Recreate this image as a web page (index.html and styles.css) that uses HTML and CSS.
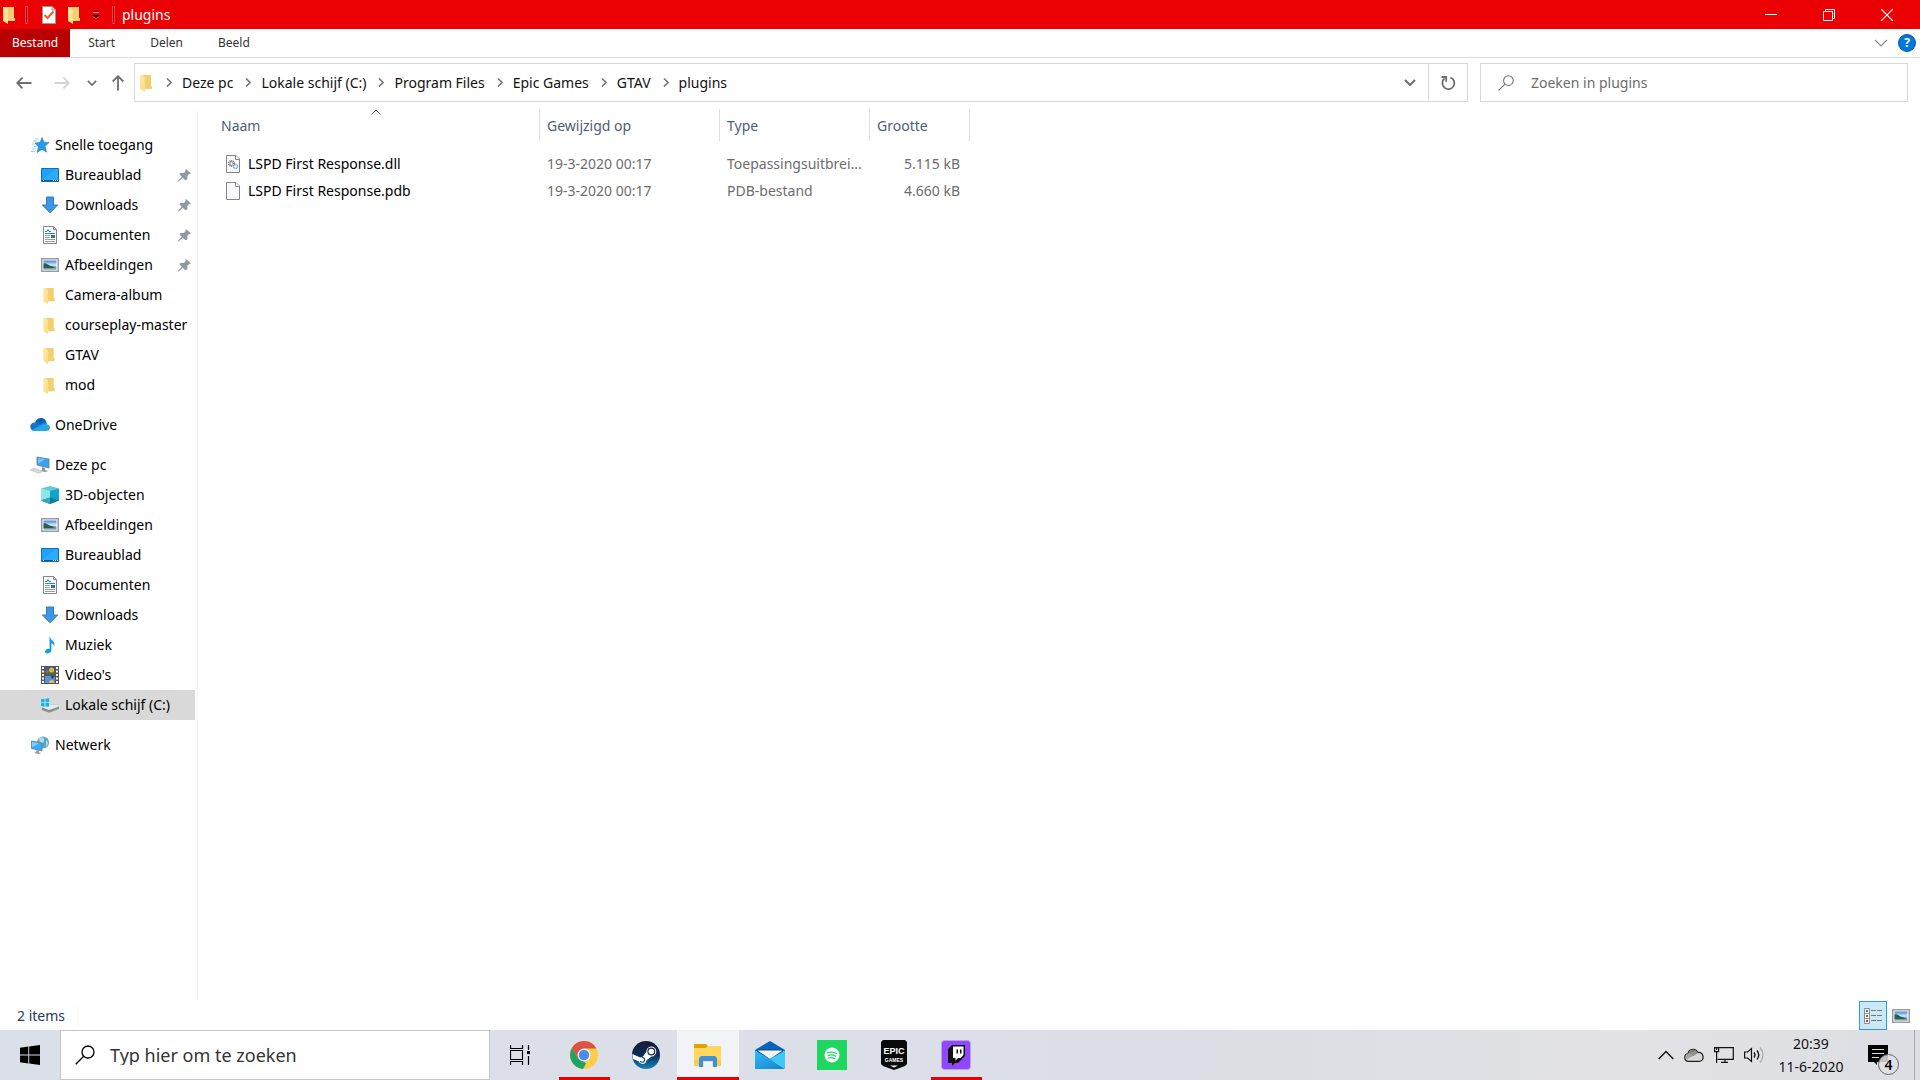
FILE: index.html
```
<!DOCTYPE html>
<html lang="nl">
<head>
<meta charset="utf-8">
<title>plugins</title>
<link rel="stylesheet" href="styles.css">
</head>
<body>
<svg class="defs" aria-hidden="true">
  <defs>
    <linearGradient id="gFolder" x1="0" y1="0" x2="1" y2="1"><stop offset="0" stop-color="#ffe9a2"/><stop offset="1" stop-color="#fbdc85"/></linearGradient>
    <linearGradient id="gSky" x1="0" y1="0" x2="0" y2="1"><stop offset="0" stop-color="#3f86d8"/><stop offset=".5" stop-color="#cfeaf6"/><stop offset="1" stop-color="#4f86a0"/></linearGradient>
    <linearGradient id="gSteam" x1="0" y1="0" x2="0" y2="1"><stop offset="0" stop-color="#171a30"/><stop offset=".5" stop-color="#0b2c5a"/><stop offset="1" stop-color="#1387b8"/></linearGradient>
    <linearGradient id="gMail" x1="0" y1="0" x2="1" y2="1"><stop offset="0" stop-color="#2fbdf3"/><stop offset="1" stop-color="#1480d0"/></linearGradient>
  </defs>
  <symbol id="folder" viewBox="0 0 12 18"><path d="M3 1h8v11h1v3H3z" fill="#f3cf72"/><path d="M0 1h3l2 3v14l-5-3z" fill="url(#gFolder)"/></symbol>
  <symbol id="star" viewBox="0 0 18 16"><path d="M11 .500l2 4.700 5 .3-4 3.700 1.500 6-4.500-3-5 3.300L7.500 10 4 6l5-.5z" fill="#2a9ae6" stroke="#1878bd" stroke-width=".6"/><path d="M4 2h4M2 4h4M1 7h3M3 9.500h3M1 12h4M0 14.500h4" stroke="#7cc5f3" stroke-width=".8"/></symbol>
  <symbol id="desktop" viewBox="0 0 18 14"><path d="M.5.5h17v13H.5z" fill="#1ea2fb" stroke="#106eb5"/><path d="M1 12L15 1h2v11z" fill="#3ab0ff" opacity=".6"/><path d="M1 12.500h16" stroke="#0b5a98"/><path d="M2 12.500h1M12 12.500h1M14 12.500h1M16 12.500h1" stroke="#fff"/></symbol>
  <symbol id="download" viewBox="0 0 18 18"><path d="M5.500 1h7v8h4.200L9 16.800 1.300 9h4.200z" fill="#3b97e4" stroke="#2f7cc4"/></symbol>
  <symbol id="document" viewBox="0 0 16 18"><path d="M1.500.5h10l3 3v14h-13z" fill="#fff" stroke="#858585"/><path d="M11.500.5v3h3" fill="none" stroke="#858585"/><path d="M3 5.500h2l1-2 1 2h2M3 7.500h10" stroke="#1a8ad4" fill="none"/><path d="M3 9.500h5M3 11.500h5M3 13.500h10M3 15.500h10" stroke="#9b9b9b"/><path d="M9 9h4v3H9z" fill="#356f9d"/></symbol>
  <symbol id="picture" viewBox="0 0 18 14"><path d="M.75.75h16.500v12.500H.75z" fill="#fff" stroke="#9c9c9c" stroke-width="1.500"/><path d="M2.500 2.500h13v9h-13z" fill="url(#gSky)"/><path d="M2.500 5.500c2-1 4 1 6 2s5 1 7 1.500l-4 1h-9z" fill="#2e5a4f"/></symbol>
  <symbol id="pin" viewBox="0 0 14 14"><path d="M8.500 0L14 4.500l-1.200 1-.8-.3-2 2.300.2 3.500L8 12 5 9.300.7 13.500 0 13.400l.3-1L4 8.300 1.500 5.600l1-1.400 4 .2L8.300 2 8 .8z" fill="#8e9aa3"/></symbol>
  <symbol id="onedrive" viewBox="0 0 20 14"><path d="M5 5C6 1 9 0 11 0c3 0 5 2 5.500 4.500L10 9z" fill="#0a5fb4"/><path d="M1 11C-1 8 1 4.500 5 4.500c3-.5 5 1.500 8 3.500l-8 5c-2 0-3-.5-4-2z" fill="#1277cf"/><path d="M11 6.500c2-3 5-2.500 6-1.500l-2 4z" fill="#1489dc"/><path d="M2 12l9-5c4-2 9-1 9 2.500 0 2.500-2 3.500-4 3.500H5c-1 0-2-.3-3-1z" fill="#28a4ea"/></symbol>
  <symbol id="pc" viewBox="0 0 20 18"><path d="M7 1l12 2v9L7 9z" fill="#37a3f3" stroke="#66798a" stroke-width=".8"/><path d="M8 2l7 1-7 5z" fill="#74c4fb"/><path d="M12 11l3 1v2l3 1-2 1-6-1 2-1z" fill="#8c9499"/><path d="M0 14l4-2 9 3-4 2.500z" fill="#d5d9dc" stroke="#b7bcc0" stroke-width=".5"/></symbol>
  <symbol id="cube" viewBox="0 0 18 18"><path d="M0 2.500L9 0l9 2.500L9 6z" fill="#5fcbd8"/><path d="M0 2.500L9 5v13l-9-3.500z" fill="#8fe6e6"/><path d="M18 2.500L9 5v13l9-3.500z" fill="#12a3cc"/><path d="M0 14.500l9-3 9 3-9 3.500z" fill="#0b7f98"/><path d="M0 14.500l9-3V18z" fill="#2fa9b8"/></symbol>
  <symbol id="music" viewBox="0 0 12 18"><path d="M6 0c1 4 6 4 4.500 10-.5-2-1.500-3-3-3.500V14c0 2-2 3.500-4.500 3.500S0 15 2 13.300c1-.9 2.500-1 3.500-.6V0z" fill="#109cf0"/></symbol>
  <symbol id="video" viewBox="0 0 18 18"><path d="M0 0h18v18H0z" fill="#555"/><path d="M2 1v17M16 1v17" stroke="#fff" stroke-width="2" stroke-dasharray="2 1.500"/><path d="M4 1h10v7H4z" fill="#2d62a8"/><path d="M4 10h10v7H4z" fill="#5b8fe5"/><path d="M4 5h10v3H4z" fill="#44762f"/><circle cx="10.500" cy="4" r="2.500" fill="#e9b43b"/><circle cx="6" cy="5.500" r="1.500" fill="#cf5334"/><path d="M8 17c0-4 5-4 5 0z" fill="#f0c130"/><path d="M10 10h4l-3 3z" fill="#29384a"/></symbol>
  <symbol id="drive" viewBox="0 0 20 16"><path d="M1 10l8-3h9l2 2v3l-11 4-8-3z" fill="#8e9193"/><path d="M1 10l8-3h9l2 2-11 4z" fill="#e8eaeb"/><path d="M15 12.500l3-1" stroke="#45d152"/><path d="M0 1l4-.5V4H0zM5 .4l4-.4v4H5zM0 5h4v4L0 8.500zM5 5h4v4.500L5 9z" fill="#11b5ee"/></symbol>
  <symbol id="network" viewBox="0 0 18 18"><circle cx="12" cy="6.500" r="6" fill="#5ba4ca"/><path d="M8 2c3-2 6 0 5 3s-3 1-4 4zM15 4c3 2 2 5 0 7z" fill="#b6dbea"/><path d="M.5 5l10.500 2v8L.5 12.500z" fill="#38adf5" stroke="#687b8a" stroke-width=".8"/><path d="M1 6l7 1.500L1 11z" fill="#80cefb"/><path d="M6 14l2 .5v2l2 .5-2 1-5-1 2-1z" fill="#8f9b9f"/></symbol>
  <symbol id="file" viewBox="0 0 14 18"><path d="M.5.5h9.500l3.500 3.500v13.500H.5z" fill="#f8f9fa" stroke="#858585"/><path d="M9.500.5v4h4" fill="#fff" stroke="#858585"/></symbol>
  <symbol id="dll" viewBox="0 0 14 18"><use href="#file"/><circle cx="5.500" cy="8.500" r="2.500" fill="none" stroke="#777" stroke-width="2" stroke-dasharray="1 .6"/><circle cx="5.500" cy="8.500" r="1.300" fill="#fff" stroke="#888" stroke-width=".6"/><circle cx="9.500" cy="11.500" r="2" fill="#eaf6ff" stroke="#76a5c8" stroke-width="1.400" stroke-dasharray="1 .4"/></symbol>
  <symbol id="chev" viewBox="0 0 6 9"><path d="M1 .5l4 4-4 4" fill="none" stroke="#777" stroke-width="1.600"/></symbol>
  <symbol id="down" viewBox="0 0 12 7"><path d="M1 1l5 5 5-5" fill="none" stroke="currentColor" stroke-width="2"/></symbol>
  <symbol id="thindown" viewBox="0 0 14 8"><path d="M1 1l6 6 6-6" fill="none" stroke="currentColor" stroke-width="1.200"/></symbol>
  <symbol id="arrow" viewBox="0 0 16 12"><path d="M15.500 6H1M6.500 .7L1.200 6l5.300 5.300" fill="none" stroke="currentColor" stroke-width="1.800"/></symbol>
  <symbol id="lens" viewBox="0 0 20 20"><circle cx="13" cy="7" r="6" fill="none" stroke="currentColor" stroke-width="1.300"/><path d="M8.700 11.300L.7 19.300" stroke="currentColor" stroke-width="1.300"/></symbol>
</svg>

<div class="window">
  <header class="titlebar">
    <svg class="folder" width="12" height="18"><use href="#folder"/></svg>
    <span class="sep"></span>
    <button class="quick check" aria-label="Eigenschappen"><svg width="14" height="18" viewBox="0 0 14 18"><path d="M.5.500h9.500l3.500 3.500v13.500H.5z" fill="#fff" stroke="#9a9a9a"/><path d="M10 .5V4h3.500" fill="#ddd" stroke="#9a9a9a"/><path d="M2.500 9l3 3 6-6.500" fill="none" stroke="#e8611c" stroke-width="2"/></svg></button>
    <button class="quick" aria-label="Nieuwe map"><svg width="12" height="18"><use href="#folder"/></svg></button>
    <button class="quick drop" aria-label="Werkbalk aanpassen"><svg width="8" height="8" viewBox="0 0 8 8"><path d="M1 .5h6" stroke="#200"/><path d="M1 1.500h6" stroke="#f99"/><path d="M.5 4h7L4 7.500z" fill="#200"/><path d="M1 5.500l3 2.300 3-2.300" fill="none" stroke="#f99" stroke-width=".5"/></svg></button>
    <span class="sep last"></span>
    <h1>plugins</h1>
    <div class="controls">
      <button aria-label="Minimaliseren"><svg width="12" height="12" viewBox="0 0 12 12"><path d="M0 5.500h12" stroke="#fff"/></svg></button>
      <button aria-label="Verkleinen"><svg width="12" height="12" viewBox="0 0 12 12"><path d="M.5 2.500h9v9h-9zM2.500 2.500v-2h9v9h-2" fill="none" stroke="#fff"/></svg></button>
      <button aria-label="Sluiten"><svg width="12" height="12" viewBox="0 0 12 12"><path d="M0 0l12 12M12 0L0 12" stroke="#fff" stroke-width="1.200"/></svg></button>
    </div>
  </header>

  <nav class="tabs">
    <button class="tab active">Bestand</button>
    <button class="tab">Start</button>
    <button class="tab">Delen</button>
    <button class="tab">Beeld</button>
    <button class="expand" aria-label="Lint uitvouwen"><svg width="14" height="8"><use href="#thindown"/></svg></button>
    <button class="help" aria-label="Help">?</button>
  </nav>

  <div class="navbar">
    <button class="arrow" aria-label="Terug"><svg width="16" height="12"><use href="#arrow"/></svg></button>
    <button class="arrow forward" aria-label="Vooruit"><svg class="flip" width="16" height="12"><use href="#arrow"/></svg></button>
    <button class="recent" aria-label="Recente locaties"><svg width="10" height="6"><use href="#down"/></svg></button>
    <button class="up" aria-label="Omhoog"><svg width="12" height="16" viewBox="0 0 12 16"><path d="M6 15.500V1M.7 6.500L6 1.200l5.300 5.300" fill="none" stroke="#6e6e6e" stroke-width="1.800"/></svg></button>
    <div class="address">
      <svg width="12" height="18"><use href="#folder"/></svg>
      <ol class="crumbs">
        <li><svg width="6" height="9"><use href="#chev"/></svg><a href="#">Deze pc</a></li>
        <li><svg width="6" height="9"><use href="#chev"/></svg><a href="#">Lokale schijf (C:)</a></li>
        <li><svg width="6" height="9"><use href="#chev"/></svg><a href="#">Program Files</a></li>
        <li><svg width="6" height="9"><use href="#chev"/></svg><a href="#">Epic Games</a></li>
        <li><svg width="6" height="9"><use href="#chev"/></svg><a href="#">GTAV</a></li>
        <li><svg width="6" height="9"><use href="#chev"/></svg><a href="#">plugins</a></li>
      </ol>
      <button class="history" aria-label="Vorige locaties"><svg width="12" height="7"><use href="#down"/></svg></button>
      <button class="refresh" aria-label="Vernieuwen"><svg width="16" height="16" viewBox="0 0 16 16"><path d="M10.500 2.500A6 6 0 1 1 4.500 3.500" fill="none" stroke="#6e6e6e" stroke-width="1.800"/><path d="M1.500 2h4.700v4.700" fill="none" stroke="#6e6e6e" stroke-width="1.800"/></svg></button>
    </div>
    <label class="search"><svg width="16" height="16"><use href="#lens"/></svg><input type="text" placeholder="Zoeken in plugins" aria-label="Zoeken in plugins"></label>
  </div>

  <div class="content">
    <nav class="tree">
      <ul>
        <li><a class="root" href="#"><svg width="20" height="16"><use href="#star"/></svg>Snelle toegang</a></li>
        <li><a href="#"><svg width="18" height="14"><use href="#desktop"/></svg>Bureaublad<svg class="pin" width="13" height="13"><use href="#pin"/></svg></a></li>
        <li><a href="#"><svg width="18" height="18"><use href="#download"/></svg>Downloads<svg class="pin" width="13" height="13"><use href="#pin"/></svg></a></li>
        <li><a href="#"><svg width="18" height="18"><use href="#document"/></svg>Documenten<svg class="pin" width="13" height="13"><use href="#pin"/></svg></a></li>
        <li><a href="#"><svg width="18" height="14"><use href="#picture"/></svg>Afbeeldingen<svg class="pin" width="13" height="13"><use href="#pin"/></svg></a></li>
        <li><a href="#"><svg width="18" height="17" viewBox="-2 0 18 17"><use href="#folder" width="12" height="17"/></svg>Camera-album</a></li>
        <li><a href="#"><svg width="18" height="17" viewBox="-2 0 18 17"><use href="#folder" width="12" height="17"/></svg>courseplay-master</a></li>
        <li><a href="#"><svg width="18" height="17" viewBox="-2 0 18 17"><use href="#folder" width="12" height="17"/></svg>GTAV</a></li>
        <li><a href="#"><svg width="18" height="17" viewBox="-2 0 18 17"><use href="#folder" width="12" height="17"/></svg>mod</a></li>
      </ul>
      <ul>
        <li><a class="root" href="#"><svg width="20" height="14"><use href="#onedrive"/></svg>OneDrive</a></li>
      </ul>
      <ul>
        <li><a class="root" href="#"><svg width="20" height="18"><use href="#pc"/></svg>Deze pc</a></li>
        <li><a href="#"><svg width="18" height="18"><use href="#cube"/></svg>3D-objecten</a></li>
        <li><a href="#"><svg width="18" height="14"><use href="#picture"/></svg>Afbeeldingen</a></li>
        <li><a href="#"><svg width="18" height="14"><use href="#desktop"/></svg>Bureaublad</a></li>
        <li><a href="#"><svg width="18" height="18"><use href="#document"/></svg>Documenten</a></li>
        <li><a href="#"><svg width="18" height="18"><use href="#download"/></svg>Downloads</a></li>
        <li><a href="#"><svg width="18" height="17"><use href="#music"/></svg>Muziek</a></li>
        <li><a href="#"><svg width="18" height="18"><use href="#video"/></svg>Video's</a></li>
        <li><a class="selected" href="#"><svg width="18" height="15"><use href="#drive"/></svg>Lokale schijf (C:)</a></li>
      </ul>
      <ul>
        <li><a class="root" href="#"><svg width="20" height="18"><use href="#network"/></svg>Netwerk</a></li>
      </ul>
    </nav>
    <main>
      <table class="files">
        <colgroup><col class="c-name"><col class="c-date"><col class="c-type"><col class="c-size"></colgroup>
        <thead>
          <tr><th>Naam<svg class="sort" width="10" height="6" viewBox="0 0 10 6"><path d="M.5 5.500L5 1l4.500 4.500" fill="none" stroke="#666"/></svg></th><th>Gewijzigd op</th><th>Type</th><th>Grootte</th></tr>
        </thead>
        <tbody>
          <tr><td><span class="file"><svg width="14" height="18"><use href="#dll"/></svg>LSPD First Response.dll</span></td><td>19-3-2020 00:17</td><td>Toepassingsuitbrei...</td><td>5.115 kB</td></tr>
          <tr><td><span class="file"><svg width="14" height="18"><use href="#file"/></svg>LSPD First Response.pdb</span></td><td>19-3-2020 00:17</td><td>PDB-bestand</td><td>4.660 kB</td></tr>
        </tbody>
      </table>
    </main>
  </div>

  <footer class="status">
    <span class="count">2 items</span>
    <button class="view on" aria-label="Details"><svg width="18" height="16" viewBox="0 0 18 16"><path d="M.5.500h5v15h-5zM.5 5.500h5M.5 10.500h5" fill="#fff" stroke="#8c8c8c"/><path d="M2 2h2v2H2z" fill="#2c7bc0"/><path d="M2 7h2v2H2z" fill="#80702c"/><path d="M2 12h2v2H2z" fill="#c23a20"/><path d="M7 2.500h5M13 2.500h5M7 7.500h5M13 7.500h5M7 12.500h5M13 12.500h5" stroke="#777"/></svg></button>
    <button class="view" aria-label="Grote pictogrammen"><svg width="18" height="14"><use href="#picture"/></svg></button>
  </footer>
</div>

<div class="taskbar">
  <button class="start" aria-label="Start"><svg width="20" height="20" viewBox="0 0 20 20"><path d="M0 2.700L8.300 1.600v8H0zM9.200 1.400L20 0v9.600H9.200zM0 10.500h8.300v8L0 17.300zM9.200 10.500H20V20L9.200 18.600z"/></svg></button>
  <label class="tasksearch"><svg width="20" height="20"><use href="#lens"/></svg><input type="text" placeholder="Typ hier om te zoeken" aria-label="Typ hier om te zoeken"></label>
  <button class="taskview" aria-label="Taakweergave"><svg width="20" height="20" viewBox="0 0 20 20"><path d="M.5 0v3.500h12V0M.5 20v-3.500h12V20M.5 5.500h12v9H.5zM18.500 0v5M18.500 11v9" fill="none" stroke="#000" stroke-width="1.200"/><path d="M17 6h3v3h-3z"/></svg></button>
  <button class="app open" aria-label="Google Chrome"><svg width="28" height="28" viewBox="0 0 28 28"><circle cx="14" cy="14" r="14" fill="#ffcd46"/><path d="M14 14L8 17.500 1.900 7A14 14 0 0 1 26.400 7.500H14z" fill="#dd5144"/><path d="M1.900 7L8 17.500l6 3 2 2L13 28A14 14 0 0 1 1.900 7z" fill="#1da462"/><circle cx="14" cy="14" r="6.500" fill="#f4f4f4"/><circle cx="14" cy="14" r="5.200" fill="#4c8bf5"/></svg></button>
  <button class="app" aria-label="Steam"><svg width="28" height="28" viewBox="0 0 28 28"><circle cx="14" cy="14" r="14" fill="url(#gSteam)"/><path d="M.3 13l8 3.500 2.500-.7 3.500-5A5 5 0 1 1 19.500 15.500l-5 3.800a4 4 0 0 1-7.800 1L.8 18z" fill="#fff"/><circle cx="19.300" cy="10.500" r="3.400" fill="none" stroke="#122848" stroke-width="1.200"/><path d="M8 20.500l1.800.7a2.400 2.400 0 0 0 1.700-4.400l-1.600-.6" fill="none" stroke="#0e3c6c" stroke-width="1.100"/></svg></button>
  <button class="app open current" aria-label="Verkenner"><svg width="28" height="24" viewBox="0 0 28 24"><path d="M0 1h12l2 2-2 2H0z" fill="#e3a008"/><path d="M0 5h12l2-2h13v20H0z" fill="#ffd75e"/><path d="M0 17h27v6H0z" fill="#fccb4c"/><path d="M5 24V15l2-2h14l2 2v9h-5v-5.500h-8V24z" fill="#3c91df"/><path d="M9 18h10v6H9z" fill="#fccb4c"/><path d="M9.500 18.500h9V24h-9z" fill="#f0f2f6"/></svg></button>
  <button class="app" aria-label="Mail"><svg width="30" height="28" viewBox="0 0 30 28"><path d="M0 9L15 0l15 9v1H0z" fill="#0b61b5"/><path d="M2 8.500h26v9L15 20 2 17z" fill="#0c4f96"/><path d="M2.500 9.500h25L15 18z" fill="#f4f4f4"/><path d="M0 9.500L15 18 30 28H0z" fill="url(#gMail)"/><path d="M30 9.500V28L15 18z" fill="#3fc8f4"/></svg></button>
  <button class="app" aria-label="Spotify"><svg width="30" height="30" viewBox="0 0 30 30"><path d="M0 0h30v30H0z" fill="#1ed760"/><circle cx="15" cy="15" r="7.500" fill="#fff"/><path d="M10.500 12.700c3-1 6.500-.7 9 .8M11 15.400c2.500-.8 5.500-.5 7.700.8M11.500 18c2-.6 4.500-.4 6.300.7" fill="none" stroke="#1ed760" stroke-width="1.300" stroke-linecap="round"/></svg></button>
  <button class="app" aria-label="Epic Games"><svg width="26" height="30" viewBox="0 0 26 30"><path d="M2 0h22l2 2v22l-2 2-11 4-11-4-2-2V2z" fill="#0a0a0a"/><text class="epic" x="13" y="14" text-anchor="middle">EPIC</text><text class="games" x="13" y="22" text-anchor="middle">GAMES</text><path d="M9 25.500h8l-4 2z" fill="#fff"/></svg></button>
  <button class="app open" aria-label="Twitch"><svg width="30" height="30" viewBox="0 0 30 30"><rect x=".5" y=".5" width="29" height="29" rx="3" fill="#9146ff" stroke="#b9a8d6"/><path d="M7 9l4-4h13v11l-7 7h-3l-3 3v-3H7z" fill="#111"/><path d="M12 6.500h10.500v8.500l-3 3H17l-2.500 2.500V18H12z" fill="#fff"/><path d="M15.500 9.500h1.500v4h-1.500zM19 9.500h1.500v4H19z" fill="#111"/></svg></button>
  <div class="tray">
    <button aria-label="Verborgen pictogrammen"><svg width="16" height="10" viewBox="0 0 16 10"><path d="M.7 9L8 1.500 15.300 9" fill="none" stroke="#111" stroke-width="1.400"/></svg></button>
    <button aria-label="OneDrive"><svg width="20" height="14" viewBox="0 0 20 14"><path d="M5 13.300C-.5 13.500-.5 6.500 4 5.500 5 0 12 0 14 4.500c6-.5 7 8.500 1.500 8.800z" fill="#d8d8d8" stroke="#222" stroke-width="1.200"/><path d="M4 5.500C6 1 12 0 14 5l-5 3c-2-2-3-2.500-5-2.500z" fill="#777"/><path d="M2 11.500L9 8l5-3-3-2-6 2c-4 1-4 4-3 6.500z" fill="#999" opacity=".8"/></svg></button>
    <button aria-label="Netwerk"><svg width="20" height="16" viewBox="0 0 20 16"><path d="M5 .7h14.300v11.600H3.500M11 12v3M7 15.400h7" fill="none" stroke="#111" stroke-width="1.200"/><path d="M.6.600h4v4h-4zM2.600 4.600V16M2.600 1v2" fill="none" stroke="#111" stroke-width="1.200"/></svg></button>
    <button aria-label="Volume"><svg width="20" height="18" viewBox="0 0 20 18"><path d="M.6 6h3L7.500 2.500v13L3.600 12h-3z" fill="none" stroke="#111" stroke-width="1.200"/><path d="M10 6.500q2 2.500 0 5M13 4.500q3.500 4.500 0 9" fill="none" stroke="#111" stroke-width="1.300"/><path d="M16 1.500q6 7.500 0 15" fill="none" stroke="#aaa" stroke-width="1.300"/></svg></button>
  </div>
  <time class="clock"><span>20:39</span><span>11-6-2020</span></time>
  <button class="notes" aria-label="Meldingen"><svg width="20" height="20" viewBox="0 0 20 20"><path d="M0 0h20v17H9v3l-3-3H0z" fill="#050505"/><path d="M4 4.500h12M4 8.500h12M4 12.500h7" stroke="#ddd"/></svg><span class="badge">4</span></button>
  <button class="peek" aria-label="Bureaublad weergeven"></button>
</div>
</body>
</html>
```
FILE: styles.css
```
* { box-sizing: border-box; }

body {
  margin: 0;
  min-height: 100vh;
  display: flex;
  flex-direction: column;
  background: #fff;
  color: #000;
  font: 14px/20px "Noto Sans", "Open Sans", sans-serif;
}

button {
  display: flex;
  align-items: center;
  justify-content: center;
  margin: 0;
  padding: 0;
  border: 0;
  background: none;
  color: inherit;
  font: inherit;
}

input {
  flex: 1;
  min-width: 0;
  padding: 0;
  border: 0;
  outline: 0;
  background: none;
  font: inherit;
}

a { color: inherit; text-decoration: none; }
ul, ol { margin: 0; padding: 0; list-style: none; }
svg { display: block; flex: none; }
.defs { position: absolute; width: 0; height: 0; }

.window { flex: 1; display: flex; flex-direction: column; }

/* Title bar */
.titlebar {
  display: flex;
  align-items: center;
  height: 29px;
  padding-left: 3px;
  background: #eb0003;
  color: #fff;
}
.sep { width: 3px; height: 18px; margin: 0 14px 0 10px; border: 1px solid #ee3a3c; background: #8c0002; }
.sep.last { margin: 0 7px 0 12px; }
.quick { margin-right: 12px; }
.quick.drop { margin-right: 0; }
.titlebar h1 { margin: 0; font-size: 14px; font-weight: 400; }
.controls { display: flex; margin-left: auto; align-self: stretch; padding-right: 4px; }
.controls button { width: 58px; }

/* Ribbon tabs */
.tabs {
  display: flex;
  gap: 1px;
  height: 29px;
  border-bottom: 1px solid #dadbdc;
  font-size: 12px;
  color: #333;
}
.tab { padding: 0 17px; }
.tab.active { padding: 0 12px; background: #b80002; color: #fff; }
.expand { margin-left: auto; color: #888; }
.help {
  align-self: center;
  width: 18px;
  height: 18px;
  margin: 0 4px 0 9px;
  border: 1px solid #0a5ca8;
  border-radius: 50%;
  background: #0078d7;
  color: #fff;
  font-weight: 700;
}

/* Navigation and address bar */
.navbar { display: flex; padding: 5px 12px 7px 16px; color: #6e6e6e; }
.arrow { margin-right: 22px; }
.arrow.forward { margin-right: 17px; color: #d4d4d4; }
.flip { transform: rotate(180deg); }
.recent { margin-right: 15px; }
.up { margin-right: 10px; }
.address {
  flex: 1;
  display: flex;
  align-items: center;
  height: 39px;
  padding-left: 5px;
  border: 1px solid #d9d9d9;
  color: #111;
}
.crumbs { display: flex; flex: 1; }
.crumbs li { display: flex; align-items: center; }
.crumbs svg { margin: 0 10px 0 12px; }
.crumbs li:first-child svg { margin-left: 14px; }
.history { align-self: stretch; width: 36px; color: #6e6e6e; }
.refresh { align-self: stretch; width: 39px; border-left: 1px solid #d9d9d9; }
.search {
  display: flex;
  align-items: center;
  gap: 17px;
  width: 428px;
  margin-left: 12px;
  padding-left: 17px;
  border: 1px solid #d9d9d9;
}
.search input::placeholder { color: #6d6d6d; opacity: 1; }

/* Folder tree */
.content { flex: 1; display: flex; }
.tree { width: 198px; padding-top: 21px; border-right: 1px solid #f6f6f6; }
.tree ul { margin-bottom: 10px; }
.tree a {
  display: flex;
  align-items: center;
  gap: 6px;
  height: 30px;
  margin-right: 2px;
  padding-left: 41px;
  white-space: nowrap;
}
.tree a.root { gap: 5px; padding-left: 30px; }
.tree a.selected { background: #d9d9d9; }
.tree .pin { margin: 0 4px 0 auto; }

/* File list */
main { flex: 1; min-width: 0; }
.files { width: 772px; table-layout: fixed; border-collapse: separate; border-spacing: 0; }
.c-name { width: 342px; }
.c-date { width: 180px; }
.c-type { width: 150px; }
.c-size { width: 100px; }
.files th {
  position: relative;
  height: 32px;
  padding: 1px 0 0 7px;
  border-right: 1px solid #e0e0e0;
  color: #4c607a;
  font-weight: 400;
  text-align: left;
}
.files th:first-child { padding-left: 23px; }
.sort { position: absolute; top: 0; left: 173px; }
.files td {
  height: 27px;
  padding: 0 7px;
  color: #6d6d6d;
  white-space: nowrap;
}
.files td:first-child { padding-left: 28px; color: #000; }
.files td:last-child { padding-right: 10px; text-align: right; }
.files tbody::before { content: ""; display: block; height: 9px; }
.file { display: flex; align-items: center; gap: 8px; }

/* Status bar */
.status { display: flex; align-items: center; height: 29px; padding-right: 5px; color: #1e395b; }
.count { margin-right: auto; padding: 0 12px 0 17px; border-right: 1px solid #f7f7f7; }
.view { width: 28px; height: 29px; border: 1px solid transparent; }
.view.on { border-color: #26a0da; background: #cbe8f6; }

/* Taskbar */
.taskbar {
  display: flex;
  height: 50px;
  background: linear-gradient(90deg, #dbdfe8 0%, #dcdfe7 50%, #dcdee4 65%, #e2e2e6 85%, #dddee3 100%);
}
.start { width: 60px; }
.tasksearch {
  display: flex;
  align-items: center;
  gap: 15px;
  width: 430px;
  padding-left: 14px;
  border: 1px solid #c6c6c8;
  background: #fff;
  font-size: 18px;
}
.tasksearch input::placeholder { color: #333; opacity: 1; }
.taskview { width: 60px; margin-right: 3px; }
.app { width: 62px; }
.app.open { background: linear-gradient(#e60000, #e60000) center bottom / 51px 3px no-repeat; }
.app.current { background: linear-gradient(#e60000, #e60000) center bottom / 62px 3px no-repeat, #f1f3f7; }
.epic { fill: #fff; font: 700 9px "Liberation Sans Narrow", "Liberation Sans", sans-serif; }
.games { fill: #fff; font: 700 5px "Liberation Sans", sans-serif; }
.tray { display: flex; gap: 10px; margin-left: auto; }
.clock {
  display: flex;
  flex-direction: column;
  justify-content: center;
  gap: 3px;
  width: 90px;
  margin-left: 2px;
  color: #111;
  text-align: center;
}
.notes { position: relative; width: 58px; padding-right: 14px; }
.badge {
  position: absolute;
  left: 22px;
  top: 24px;
  width: 21px;
  height: 21px;
  border: 1px solid #666;
  border-radius: 50%;
  background: rgba(225, 225, 230, .85);
  color: #000;
  font-weight: 600;
  line-height: 19px;
}
.peek { width: 6px; border-left: 1px solid #a9aab0; }
```
